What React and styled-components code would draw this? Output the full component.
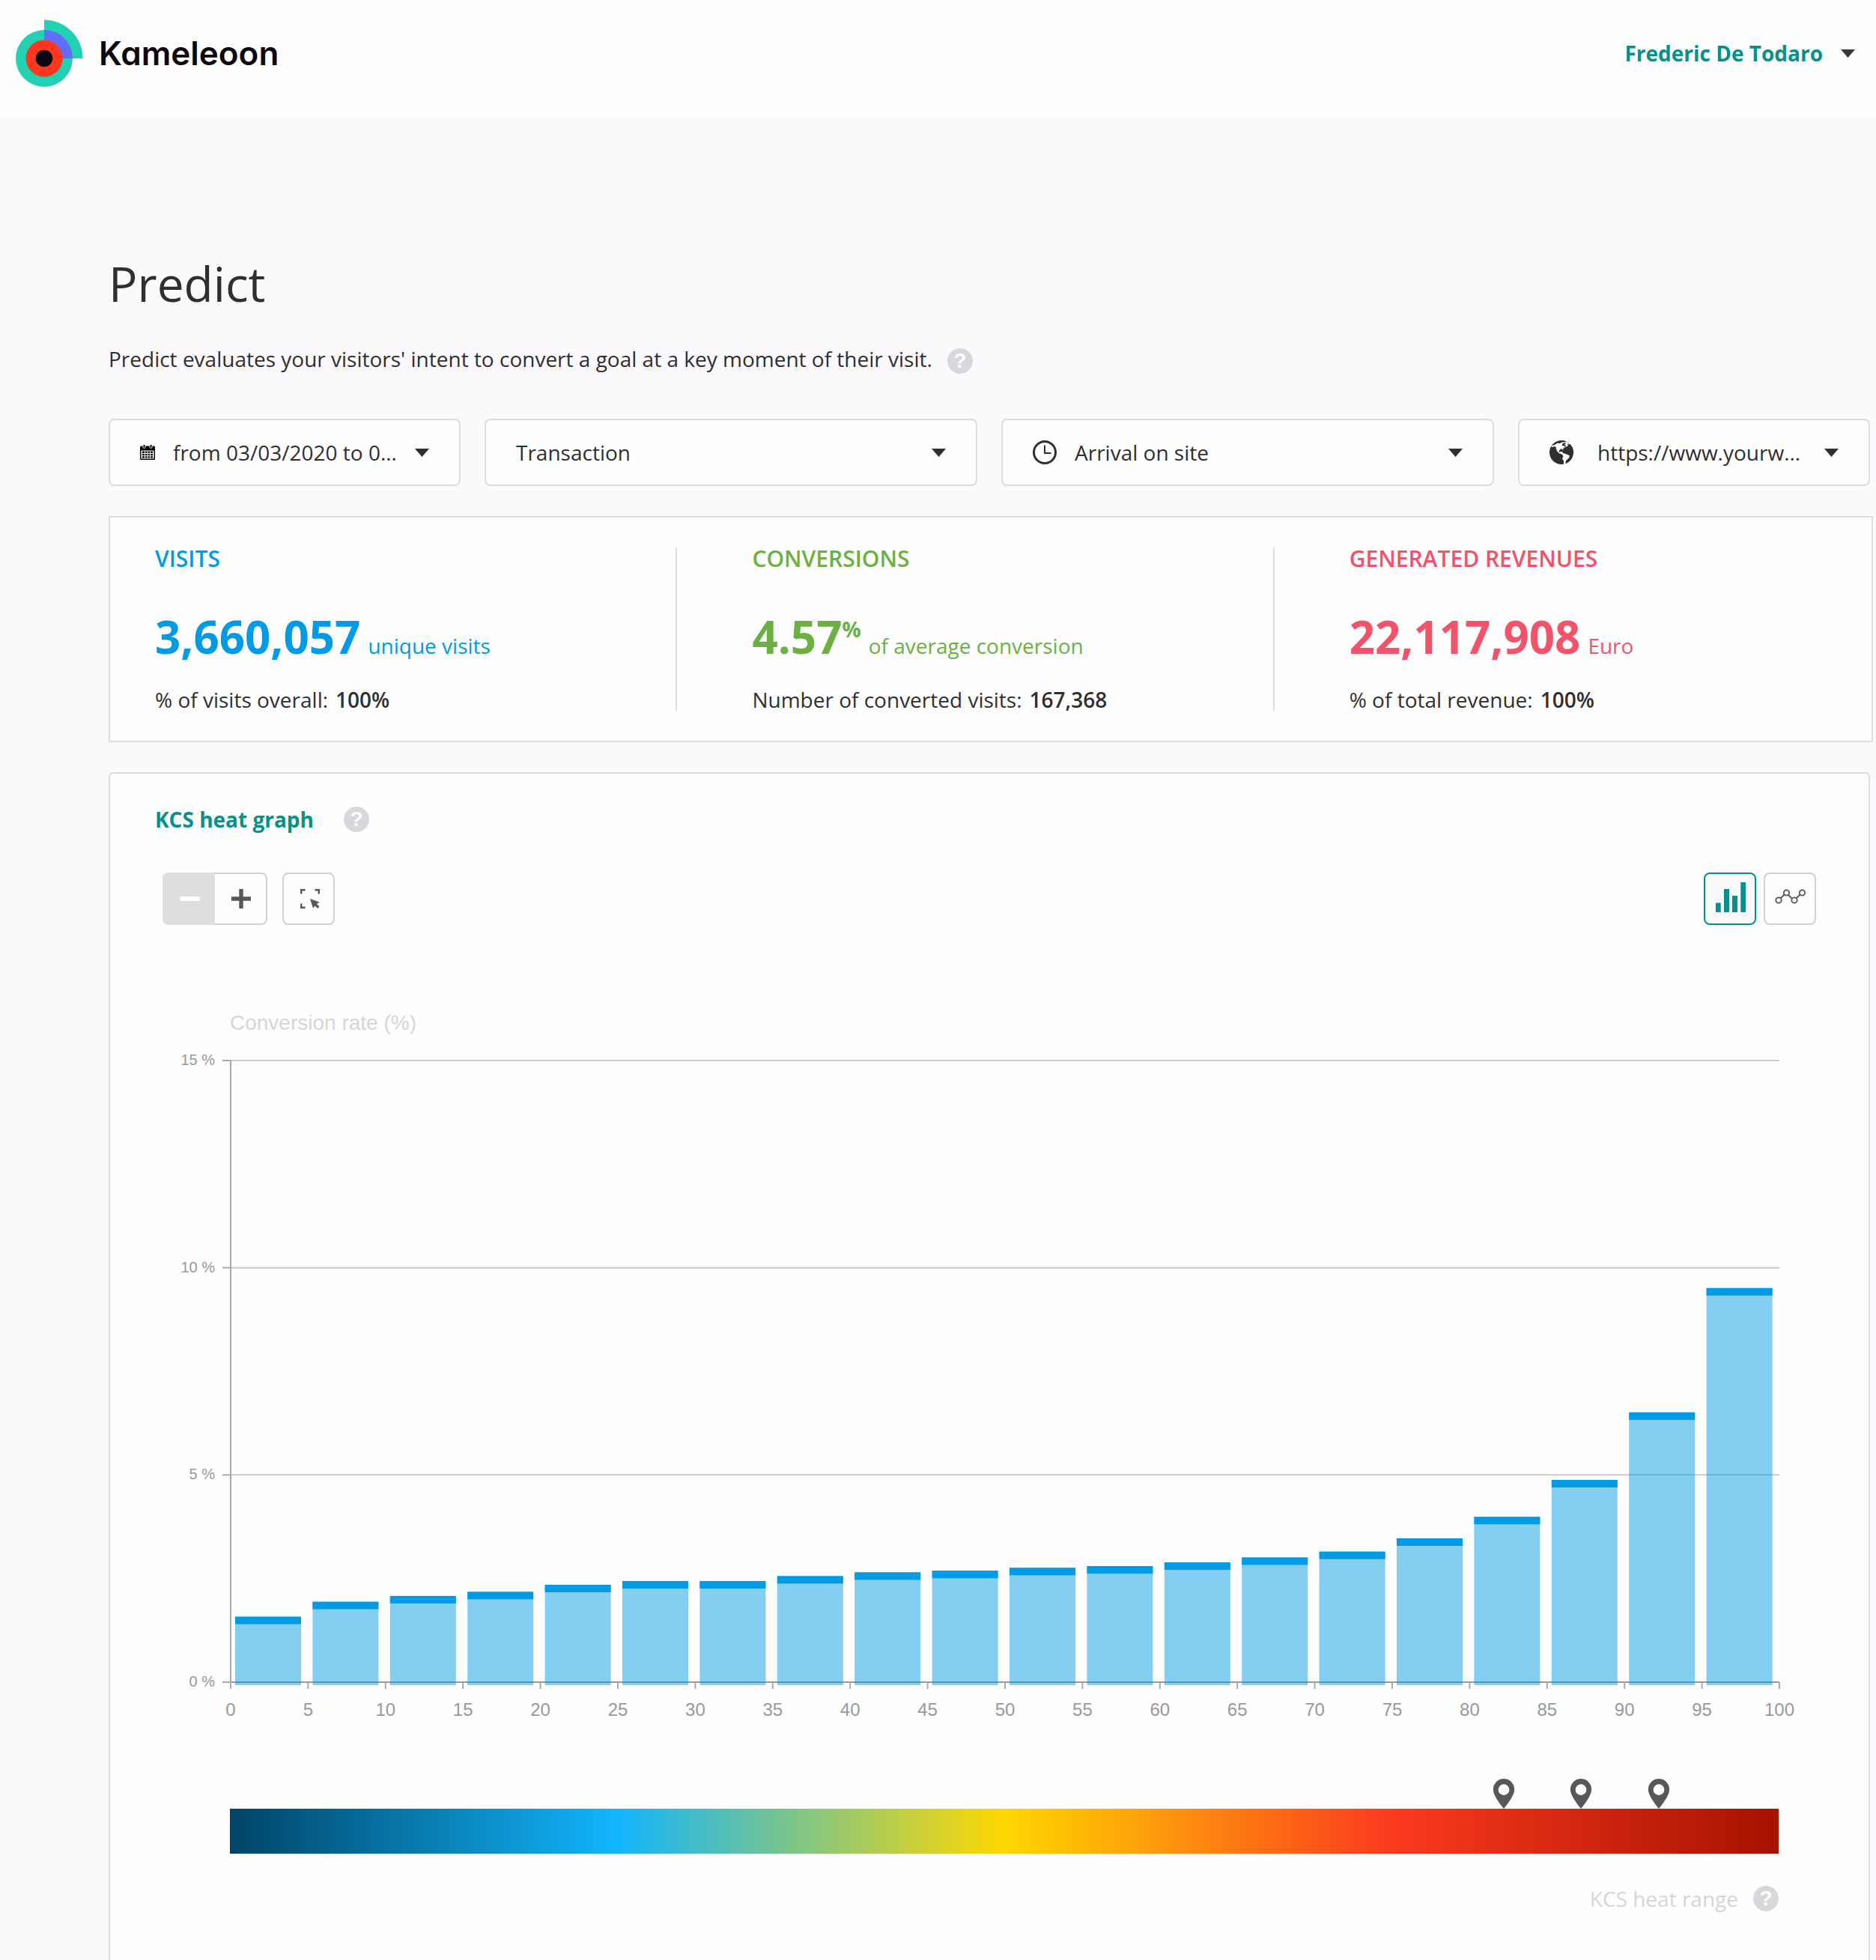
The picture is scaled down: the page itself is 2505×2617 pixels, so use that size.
import React from 'react'
import styled, { createGlobalStyle, css } from 'styled-components'

const GlobalStyle = createGlobalStyle`
:root{
    --teal:#03918b;
    --ink:#2f2e31;
    --line:#dddce0;
    --muted:#d6d5d8;
    --panel:#fefefe;
    --page:#fbf9fc;
    --blue:#009be4;
    --green:#6cb043;
    --pink:#f1536b;
}
*{
    box-sizing:border-box;
}
body{
    margin:0;
    background:var(--page);
    color:var(--ink);
    font-family:"Open Sans", sans-serif;
    font-size:28px;
    line-height:40px;
}
button, select{
    font:inherit;
    color:inherit;
    cursor:pointer;
}
`

const rates = [
    1.58, 1.94, 2.08, 2.18, 2.35, 2.44, 2.44, 2.56, 2.65, 2.69,
    2.76, 2.8, 2.89, 3.01, 3.15, 3.47, 3.99, 4.88, 6.51, 9.51
]

const pins = [82.25, 87.25, 92.25]

const stats = [
    { label: 'Visits', color: 'var(--blue)', value: '3,660,057', unit: 'unique visits', detail: '% of visits overall:', total: '100%' },
    { label: 'Conversions', color: 'var(--green)', value: '4.57', sup: '%', unit: 'of average conversion', detail: 'Number of converted visits:', total: '167,368' },
    { label: 'Generated revenues', color: 'var(--pink)', value: '22,117,908', unit: 'Euro', detail: '% of total revenue:', total: '100%' }
]

/* icons */

const Logo = () => (
    <svg width="92" height="92" viewBox="0 0 92 92" aria-hidden="true">
        <circle cx="39" cy="53" r="38" fill="#21d1b1" />
        <path d="M39 53V1.5a51.5 51.5 0 0 1 51.5 51.5z" fill="#21d1b1" />
        <path d="M39 53V15a38 38 0 0 1 38 38z" fill="#646cff" />
        <circle cx="39" cy="53" r="24.5" fill="#ff371f" />
        <circle cx="39" cy="53" r="11.3" fill="#0b090d" />
    </svg>
)

const Caret = () => (
    <CaretIcon width="19" height="11" viewBox="0 0 19 11" aria-hidden="true">
        <path d="M0 0h19L9.5 11z" fill="currentColor" />
    </CaretIcon>
)

const CalendarIcon = () => (
    <svg width="20" height="20" viewBox="0 0 20 20" aria-hidden="true">
        <rect x="0" y="1.5" width="20" height="18.5" rx="1.5" fill="#000" />
        <path d="M1.5 7.5h17v11h-17z" fill="#fff" />
        <path d="M4 0v3.5q1.5 2 3 0V0M13 0v3.5q1.5 2 3 0V0" fill="#000" stroke="#fff" strokeWidth="1" />
        <path d="M3 8.5h3V11H3zM7 8.5h2.5V11H7zM10.5 8.5H13V11h-2.5zM14 8.5h3V11h-3zM3 12h3v2.3H3zM7 12h2.5v2.3H7zM10.5 12H13v2.3h-2.5zM14 12h3v2.3h-3zM3 15.3h3v2.2H3zM7 15.3h2.5v2.2H7zM10.5 15.3H13v2.2h-2.5zM14 15.3h3v2.2h-3z" fill="#000" />
    </svg>
)

const ClockIcon = () => (
    <svg width="32" height="32" viewBox="0 0 32 32" fill="none" stroke="currentColor" aria-hidden="true">
        <circle cx="16" cy="16" r="14.5" strokeWidth="3" />
        <path d="M16 6.5V17h8.5" strokeWidth="2" />
    </svg>
)

const GlobeIcon = () => (
    <svg width="32" height="32" viewBox="0 0 32 32" aria-hidden="true">
        <circle cx="16" cy="16" r="16" fill="currentColor" />
        <path d="M3 7L0 8h2l2.5 1L6 8l2.5 .5 .5 3.5 1.5 3 3 2.500 2 .5 2.500 2 .5 1.500-1.500 3 2 3v4.500h2l1-5 4-3.500 1-4-3-1.500-3-.5-2.500-2-4-.5-1 1-1-1.500 2-3h2.500l1 2 .5-3 3.500-2 2.500-1V4l2 1.500L27 4l-5-2.500-2 1h-3.500l-3 1.500-3-.5L7 6z" fill="#fff" />
        <path d="M7 4.500Q11 1 16 .5l5 .5-2 1h-3l-2 1.500-3-.5-3 2z" fill="currentColor" />
        <path d="M17 4.500l4-1.500 1 1.500-2 1 2 2-1 1.500-2-2-2 .5zM24 9l3-1h2l3 6-1 6h-5l-3-1.500-6-2 1.500-2 4-1.500 1-3z" fill="currentColor" />
        <path d="M21 31.500q7-3 9.500-9.500l-5 6.500z" fill="currentColor" />
    </svg>
)

const MinusIcon = () => (
    <svg width="26" height="26" viewBox="0 0 26 26" aria-hidden="true">
        <path d="M1.5 10h26v6h-26z" fill="#fff" />
    </svg>
)

const PlusIcon = () => (
    <svg width="26" height="26" viewBox="0 0 26 26" aria-hidden="true">
        <path d="M11.3 0h5.4v10.3H27v5.4H16.700V26h-5.4V15.7H1v-5.4h10.3z" fill="#58575a" />
    </svg>
)

const SelectionIcon = () => (
    <svg width="30" height="26" viewBox="0 0 30 26" aria-hidden="true">
        <path d="M5.2 6.500V1.200h5.300M23.500 1.200h5.300v5.300M5.200 19.500v5.300h5.300" fill="none" stroke="#58575a" strokeWidth="2.4" />
        <path d="M17 13l12.500 4.500-3.500 2.500 3.500 3.500-2.300 2.500-3.700-3.500-2.500 3z" fill="#58575a" />
    </svg>
)

const BarsIcon = () => (
    <svg width="40" height="46" viewBox="0 0 40 46" aria-hidden="true">
        <path d="M1 28.500h6.700V41H1zM12 10h7v31h-7zM23 19h7v22h-7zM34.300 1H41v40h-6.700z" fill="#03918b" />
    </svg>
)

const CurveIcon = () => (
    <svg width="42" height="22" viewBox="0 0 42 22" fill="none" stroke="#58575a" strokeWidth="1.800" aria-hidden="true">
        <path d="M8.500 10.500l5-5M18.500 5.500l5 5M29.500 10.500l5-5" />
        <circle cx="6" cy="13" r="3.700" />
        <circle cx="16.500" cy="3" r="3.700" />
        <circle cx="27" cy="13" r="3.700" />
        <circle cx="37.500" cy="3" r="3.700" />
    </svg>
)

const PinIcon = () => (
    <svg width="30" height="40" viewBox="0 0 30 41" aria-hidden="true">
        <path d="M15 0A14.500 14.500 0 0 0 .5 14.500C.5 22 8 32 15 41 22 32 29.500 22 29.500 14.500A14.500 14.500 0 0 0 15 0zm0 22.500a7.500 7.500 0 1 1 0-15 7.500 7.500 0 0 1 0 15z" fill="#58575a" fillRule="evenodd" />
    </svg>
)

const Help = ({ about }) => (
    <HelpButton type="button" aria-label={`Help about ${about}`}>?</HelpButton>
)

/* chart */

const chart = { width: 2348, height: 970, left: 161, right: 2229, top: 81, bottom: 911 }
const step = (chart.right - chart.left) / rates.length
const yOf = (rate) => chart.bottom - (rate / 15) * (chart.bottom - chart.top)

function HeatChart() {
    return (
        <ChartSvg viewBox={`0 0 ${chart.width} ${chart.height}`} role="img" aria-label="Conversion rate by KCS heat range">
            <ChartTitle x="160" y="40">Conversion rate (%)</ChartTitle>
            {[0, 5, 10, 15].map((rate) => (
                <g key={rate}>
                    <GridLine $base={rate === 0} x1={chart.left} x2={chart.right} y1={yOf(rate)} y2={yOf(rate)} />
                    <Axis x1={chart.left - 11} x2={chart.left} y1={yOf(rate)} y2={yOf(rate)} />
                    <RateLabel x={chart.left - 21} y={yOf(rate) + 6}>{rate} %</RateLabel>
                </g>
            ))}
            <Axis x1={chart.left} x2={chart.left} y1={chart.top} y2={chart.bottom} />
            {rates.map((rate, i) => {
                const x = chart.left + i * step + 6
                const y = yOf(rate)
                return (
                    <g key={i}>
                        <Bar x={x} y={y} width="88" height={chart.bottom + 4 - y} />
                        <BarCap x={x} y={y} width="88" height="10" />
                    </g>
                )
            })}
            {Array.from({ length: rates.length + 1 }, (_, i) => {
                const x = chart.left + i * step
                return (
                    <g key={i}>
                        <Axis x1={x} x2={x} y1={chart.bottom} y2={chart.bottom + 9} />
                        <RangeLabel x={x} y={chart.bottom + 45}>{i * 5}</RangeLabel>
                    </g>
                )
            })}
        </ChartSvg>
    )
}

export default function App() {
    return (
        <>
            <GlobalStyle />
            <Header>
                <Brand href="#">
                    <Logo />
                    <BrandName>Kameleoon</BrandName>
                </Brand>
                <UserMenu type="button">
                    Frederic De Todaro
                    <Caret />
                </UserMenu>
            </Header>
            <Main>
                <Title>Predict</Title>
                <Intro>
                    <p>Predict evaluates your visitors' intent to convert a goal at a key moment of their visit.</p>
                    <Help about="Predict" />
                </Intro>

                <Filters>
                    <DateFilter type="button">
                        <CalendarIcon />
                        <span>from 03/03/2020 to 0...</span>
                        <Caret />
                    </DateFilter>
                    <Filter>
                        <select aria-label="Goal"><option>Transaction</option></select>
                        <Caret />
                    </Filter>
                    <Filter>
                        <ClockIcon />
                        <select aria-label="Key moment"><option>Arrival on site</option></select>
                        <Caret />
                    </Filter>
                    <Filter $wide>
                        <GlobeIcon />
                        <select aria-label="Site"><option>https://www.yourw...</option></select>
                        <Caret />
                    </Filter>
                </Filters>

                <Stats>
                    {stats.map((stat) => (
                        <Stat key={stat.label}>
                            <StatLabel $color={stat.color}>{stat.label}</StatLabel>
                            <StatValue $color={stat.color}>
                                {stat.value}{stat.sup && <sup>{stat.sup}</sup>}<small>{stat.unit}</small>
                            </StatValue>
                            <StatDetail>{stat.detail}<b>{stat.total}</b></StatDetail>
                        </Stat>
                    ))}
                </Stats>

                <Card>
                    <CardHead>
                        <h2>KCS heat graph</h2>
                        <Help about="the KCS heat graph" />
                    </CardHead>
                    <Toolbar>
                        <ZoomGroup>
                            <ZoomOut type="button" aria-label="Zoom out" disabled><MinusIcon /></ZoomOut>
                            <ZoomIn type="button" aria-label="Zoom in"><PlusIcon /></ZoomIn>
                        </ZoomGroup>
                        <ToolButton type="button" aria-label="Select a range"><SelectionIcon /></ToolButton>
                        <ViewGroup>
                            <ToolButton type="button" aria-label="Bar view" aria-pressed="true" $active><BarsIcon /></ToolButton>
                            <ToolButton type="button" aria-label="Curve view" aria-pressed="false"><CurveIcon /></ToolButton>
                        </ViewGroup>
                    </Toolbar>
                    <HeatChart />
                    <HeatScale>
                        {pins.map((pin) => (
                            <Pin key={pin} style={{ left: `${pin}%` }}><PinIcon /></Pin>
                        ))}
                    </HeatScale>
                    <ScaleCaption>
                        KCS heat range
                        <Help about="the KCS heat range" />
                    </ScaleCaption>
                </Card>
            </Main>
        </>
    )
}

const Header = styled.header`
display:flex;
align-items:center;
justify-content:space-between;
height:156px;
padding:0 28px 14px 20px;
background:var(--panel);
`

const Brand = styled.a`
display:flex;
align-items:center;
gap:20px;
color:#0b090d;
text-decoration:none;
`

const BrandName = styled.span`
font-family:Inter, sans-serif;
font-size:44px;
font-weight:600;
line-height:56px;
font-feature-settings:"cv11";
`

const UserMenu = styled.button`
display:flex;
align-items:center;
gap:24px;
padding:0;
border:0;
background:none;
color:var(--teal);
font-weight:700;
svg{
    color:#38373a;
}
`

const CaretIcon = styled.svg`
flex:none;
pointer-events:none;
`

const Main = styled.main`
padding:179px 8px 0 145px;
`

const Title = styled.h1`
margin:0;
font-size:64px;
font-weight:400;
line-height:88px;
`

const Intro = styled.div`
display:flex;
align-items:flex-end;
gap:20px;
margin-top:36px;
p{
    margin:0;
}
`

const HelpButton = styled.button`
flex:none;
width:34px;
height:34px;
padding:0;
border:0;
border-radius:50%;
background:#d9d7db;
color:#fff;
font-family:"Liberation Sans", sans-serif;
font-weight:700;
line-height:34px;
text-align:center;
`

const Filters = styled.div`
display:grid;
grid-template-columns:5fr 7fr 7fr 5fr;
gap:32px;
margin-top:60px;
`

const filterBox = css`
display:flex;
align-items:center;
gap:24px;
height:90px;
padding:0 40px;
border:2px solid var(--line);
border-radius:8px;
background:var(--panel);
`

const DateFilter = styled.button`
${filterBox}
text-align:left;
span{
    flex:1;
    white-space:nowrap;
}
`

const Filter = styled.label`
${filterBox}
gap:${props => props.$wide ? '32px' : '24px'};
select{
    flex:1;
    min-width:0;
    height:86px;
    padding:0;
    border:0;
    background:none;
    appearance:none;
}
${CaretIcon}{
    margin-left:${props => props.$wide ? '-32px' : '-24px'};
}
`

const Stats = styled.section`
display:grid;
grid-template-columns:19fr 20fr 20fr;
margin:40px -4px 0 0;
padding:40px 0;
border:2px solid var(--line);
background:var(--panel);
`

const Stat = styled.div`
padding-left:100px;
border-right:2px solid var(--line);
&:first-child{
    padding-left:60px;
}
&:last-child{
    border-right:0;
}
`

const StatLabel = styled.h2`
margin:0;
color:${props => props.$color};
font-size:30px;
font-weight:600;
line-height:30px;
text-transform:uppercase;
`

const StatValue = styled.p`
margin:59px 0 39px;
color:${props => props.$color};
font-size:60px;
font-weight:700;
line-height:60px;
sup{
    font-size:28px;
    line-height:0;
    vertical-align:22px;
}
small{
    margin-left:10px;
    font-size:28px;
    font-weight:400;
    line-height:28px;
}
`

const StatDetail = styled.p`
margin:0;
line-height:30px;
b{
    margin-left:10px;
    font-weight:600;
}
`

const Card = styled.section`
margin-top:40px;
padding:41px 0 64px;
border:2px solid var(--line);
border-radius:6px;
background:var(--panel);
`

const CardHead = styled.div`
display:flex;
align-items:center;
gap:40px;
padding:0 60px;
h2{
    margin:0;
    color:var(--teal);
    font-size:28px;
    font-weight:700;
    line-height:40px;
}
`

const Toolbar = styled.div`
display:flex;
gap:20px;
margin-top:51px;
padding:0 70px;
`

const ZoomGroup = styled.div`
display:flex;
`

const ViewGroup = styled.div`
display:flex;
gap:10px;
margin-left:auto;
`

const ToolButton = styled.button`
display:flex;
align-items:center;
justify-content:center;
width:70px;
height:70px;
padding:0;
border:2px solid ${props => props.$active ? 'var(--teal)' : '#d1d0d3'};
border-radius:8px;
background:${props => props.$active ? 'var(--page)' : 'var(--panel)'};
svg{
    overflow:visible;
}
`

const ZoomOut = styled(ToolButton)`
border-color:#dedde0;
border-radius:8px 0 0 8px;
background:#dedde0;
`

const ZoomIn = styled(ToolButton)`
border-left:0;
border-radius:0 8px 8px 0;
`

const ChartSvg = styled.svg`
display:block;
width:100%;
height:auto;
margin-top:100px;
font-family:"Liberation Sans", Arial, sans-serif;
`

const ChartTitle = styled.text`
fill:var(--muted);
font-size:28px;
`

const RateLabel = styled.text`
fill:#99989b;
font-size:20px;
text-anchor:end;
`

const RangeLabel = styled.text`
fill:#99989b;
font-size:24px;
text-anchor:middle;
`

const GridLine = styled.line`
stroke:${props => props.$base ? '#99989b' : '#cbcacd'};
stroke-width:2px;
`

const Axis = styled.line`
stroke:#aaa9ac;
stroke-width:2px;
`

const Bar = styled.rect`
fill:var(--blue);
fill-opacity:0.48;
`

const BarCap = styled.rect`
fill:var(--blue);
`

const HeatScale = styled.div`
position:relative;
height:60px;
margin:110px 120px 0 160px;
background:linear-gradient(90deg, #004466 0%, #12b5fc 25%, #ffd800 50%, #fb3a1e 75%, #a51200 100%);
`

const Pin = styled.span`
position:absolute;
bottom:100%;
height:40px;
line-height:0;
transform:translateX(-50%);
`

const ScaleCaption = styled.div`
display:flex;
align-items:center;
justify-content:flex-end;
gap:20px;
margin-top:40px;
padding-right:120px;
color:var(--muted);
`
